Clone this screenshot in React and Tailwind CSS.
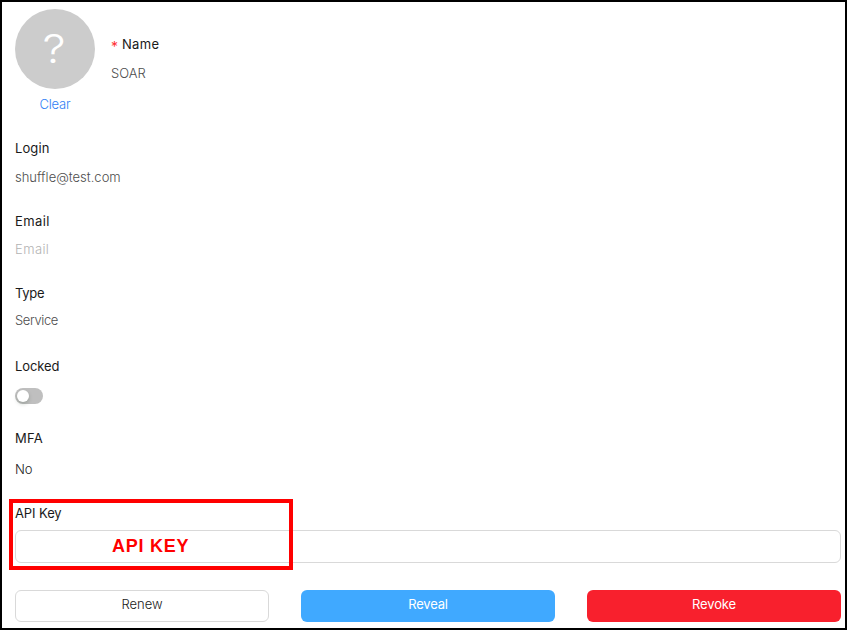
const label = "block h-5 text-[13px] leading-5 text-[#1a1a1a]";
const value = "block h-5 text-[13px] font-light leading-5 text-[#4d4d4d]";

function Field({ className, title, titleClass = "", children }) {
  return (
    <div className={className}>
      <span className={`${label} ${titleClass}`}>{title}</span>
      {children}
    </div>
  );
}

export default function App() {
  return (
    <main className="relative flex h-[630px] w-[847px] flex-col overflow-hidden border-2 border-black bg-white pl-[13px] pr-1 font-['Inter',sans-serif]">
      <header className="flex h-[136px] shrink-0 pt-[7px]">
        <div className="flex w-20 flex-col items-center">
          <div className="flex size-20 shrink-0 items-center justify-center rounded-full bg-[#ccc] pb-px pr-px">
            <span className="scale-x-115 text-[40px] font-light leading-none text-white">?</span>
          </div>
          <a className="mt-[5px] text-[13px] font-light leading-5 tracking-[-0.2px] text-[#2f80f5]">Clear</a>
        </div>
        <div className="ml-4 pt-[25px]">
          <div className="flex h-5 text-[13px] leading-5">
            <span className="w-[11px] pt-[3px] text-[14px] text-[#ff3034]">*</span>
            <span className="tracking-[0.3px] text-[#1a1a1a]">Name</span>
          </div>
          <span className={`${value} mt-[9px]`}>SOAR</span>
        </div>
      </header>

      <Field className="h-[73px] shrink-0" title="Login" titleClass="tracking-[0.1px]">
        <span className={`${value} mt-[9px]`}>shuffle@test.com</span>
      </Field>
      <Field className="h-[72px] shrink-0" title="Email" titleClass="tracking-[0.4px]">
        <span className="mt-2 block h-5 text-[13px] font-light leading-5 tracking-[0.4px] text-[#b3b3b3]">Email</span>
      </Field>
      <Field className="h-[73px] shrink-0" title="Type" titleClass="tracking-[-0.3px]">
        <span className={`${value} mt-[7px] tracking-[-0.4px]`}>Service</span>
      </Field>
      <Field className="h-[72px] shrink-0" title="Locked" titleClass="tracking-[-0.1px]">
        <button className="mt-3 flex h-4 w-7 items-center rounded-full bg-[#bfbfbf] pl-[2px]">
          <span className="size-3 rounded-full bg-white shadow-[0_2px_4px_rgba(0,35,11,0.2)]" />
        </button>
      </Field>
      <Field className="h-[75px] shrink-0" title="MFA" titleClass="tracking-[0.3px]">
        <span className="mt-[11px] block h-5 text-[13px] font-light leading-5 text-[#1a1a1a]">No</span>
      </Field>
      <Field className="h-[87px] shrink-0" title="API Key" titleClass="tracking-[-0.1px]">
        <div className="mt-[7px] flex h-[33px] items-center rounded-md border border-[#d9d9d9] pb-[2px] pl-24">
          <span className="font-['Liberation_Sans',sans-serif] text-[18px] font-bold leading-5 tracking-[0.75px] text-[#f00]">
            API KEY
          </span>
        </div>
      </Field>
      <div className="grid h-8 shrink-0 grid-cols-3 gap-8 text-[13px]">
        <button className="rounded-md border border-[#d9d9d9] pb-[2px] font-light text-[#1a1a1a]">Renew</button>
        <button className="rounded-md bg-[#40a9ff] pb-[3px] tracking-[-0.2px] text-white">Reveal</button>
        <button className="rounded-md bg-[#f8202d] pb-[3px] tracking-[-0.1px] text-white">Revoke</button>
      </div>
      <div className="absolute left-[7px] top-[497px] h-[71px] w-[284px] border-4 border-[#f00]" />
    </main>
  );
}
